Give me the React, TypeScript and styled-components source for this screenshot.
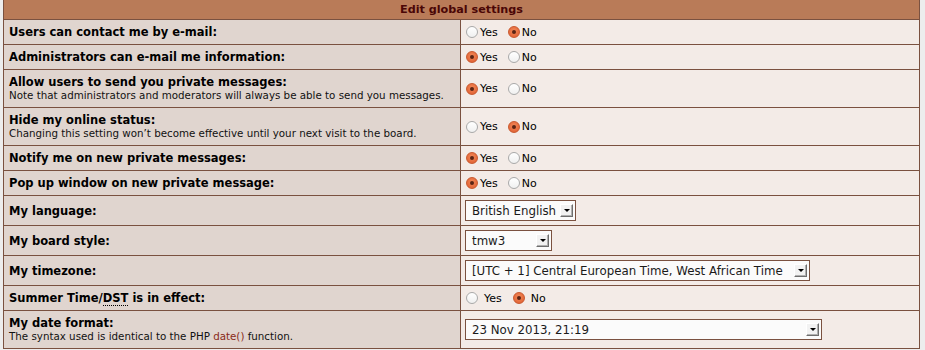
import React from "react";
import styled, { createGlobalStyle } from "styled-components";

const GlobalStyle = createGlobalStyle`
  body {
    margin: 0;
    background: #ededed;
    font-family: "DejaVu Sans", Verdana, sans-serif;
    color: #000;
  }
`;

type Setting = {
  label: React.ReactNode;
  explain?: React.ReactNode;
  kind: "radio" | "select";
  value?: boolean;
  options?: string;
  width?: number;
  wide?: boolean;
};

// built lazily so the styled parts below exist by the time it runs
function getSettings(): Setting[] {
  return [
    { label: "Users can contact me by e-mail:", kind: "radio", value: false },
    { label: "Administrators can e-mail me information:", kind: "radio", value: true },
    {
      label: "Allow users to send you private messages:",
      explain: "Note that administrators and moderators will always be able to send you messages.",
      kind: "radio",
      value: true,
    },
    {
      label: "Hide my online status:",
      explain: "Changing this setting won’t become effective until your next visit to the board.",
      kind: "radio",
      value: false,
    },
    { label: "Notify me on new private messages:", kind: "radio", value: true },
    { label: "Pop up window on new private message:", kind: "radio", value: true },
    { label: "My language:", kind: "select", options: "British English", width: 111 },
    { label: "My board style:", kind: "select", options: "tmw3", width: 87 },
    {
      label: "My timezone:",
      kind: "select",
      options: "[UTC + 1] Central European Time, West African Time",
      width: 345,
    },
    {
      label: (
        <>
          Summer Time/<Abbr>DST</Abbr> is in effect:
        </>
      ),
      kind: "radio",
      value: false,
      wide: true,
    },
    {
      label: "My date format:",
      explain: (
        <>
          The syntax used is identical to the PHP <Link>date()</Link> function.
        </>
      ),
      kind: "select",
      options: "23 Nov 2013, 21:19",
      width: 357,
    },
  ];
}

function RadioPair({ value, wide }: { value: boolean; wide?: boolean }) {
  return (
    <RadioGroup>
      <RadioOption wide={wide}>
        <Radio checked={value} />
        <span>Yes</span>
      </RadioOption>
      <RadioOption wide={wide}>
        <Radio checked={!value} />
        <span>No</span>
      </RadioOption>
    </RadioGroup>
  );
}

function FakeSelect({ text, width }: { text: string; width: number }) {
  return (
    <SelectBox style={{ width }}>
      <SelectText>{text}</SelectText>
      <ArrowButton>
        <Triangle />
      </ArrowButton>
    </SelectBox>
  );
}

function App() {
  const settings = getSettings();
  return (
    <>
      <GlobalStyle />
      <Page>
        <Panel>
          <HeaderBar>Edit global settings</HeaderBar>
          {settings.map((s, i) => (
            <Row key={i} size={s.explain ? "tall" : s.kind === "select" ? "select" : "normal"}>
              <LabelCell>
                <Label>{s.label}</Label>
                {s.explain && <Explain>{s.explain}</Explain>}
              </LabelCell>
              <ValueCell>
                {s.kind === "radio" ? (
                  <RadioPair value={!!s.value} wide={s.wide} />
                ) : (
                  <FakeSelect text={s.options || ""} width={s.width || 100} />
                )}
              </ValueCell>
            </Row>
          ))}
        </Panel>
      </Page>
    </>
  );
}

const Page = styled.div`
  padding-left: 3px;
`;

const Panel = styled.div`
  width: 915px;
  border-left: 1px solid #7a5140;
  border-right: 1px solid #7a5140;
  border-bottom: 1px solid #7a5140;
`;

const HeaderBar = styled.div`
  height: 19px;
  line-height: 19px;
  background: #b97b58;
  border-bottom: 1px solid #7a5140;
  text-align: center;
  font-weight: bold;
  font-size: 11.2px;
  color: #4a0606;
`;

const Row = styled.div<{ size: "normal" | "tall" | "select" }>`
  display: grid;
  grid-template-columns: 457px 1fr;
  height: ${(p) => (p.size === "tall" ? 37 : p.size === "select" ? 29 : 24)}px;
  border-bottom: 1px solid #7a5140;
  &:last-child {
    border-bottom: none;
  }
`;

const LabelCell = styled.div`
  background: #e0d5cf;
  border-right: 1px solid #7a5140;
  padding-left: 5px;
  display: flex;
  flex-direction: column;
  justify-content: center;
`;

const Label = styled.div`
  font-weight: bold;
  font-size: 11.5px;
  line-height: 14px;
  color: #000;
`;

const Explain = styled.div`
  font-size: 10.3px;
  line-height: 13px;
  color: #111;
`;

const Abbr = styled.abbr`
  text-decoration: none;
  border-bottom: 1px dotted #000;
`;

const Link = styled.span`
  color: #8a2a18;
`;

const ValueCell = styled.div`
  background: #f3ebe7;
  padding-left: 4px;
  display: flex;
  align-items: center;
`;

const RadioGroup = styled.div`
  display: flex;
  align-items: center;
  font-size: 11px;
  color: #000;
  padding-left: 1px;
`;

const RadioOption = styled.label<{ wide?: boolean }>`
  display: flex;
  align-items: center;
  gap: ${(p) => (p.wide ? 6 : 2)}px;
  margin-right: ${(p) => (p.wide ? 11 : 10)}px;
`;

const Radio = styled.span<{ checked: boolean }>`
  position: relative;
  width: 12px;
  height: 12px;
  box-sizing: border-box;
  border-radius: 50%;
  border: 1px solid ${(p) => (p.checked ? "#c9592f" : "#a9a9a9")};
  background: ${(p) =>
    p.checked
      ? "radial-gradient(circle at 50% 40%, #f38a5a 0%, #e4683a 70%, #d65a2e 100%)"
      : "linear-gradient(#ffffff, #f0f0f0)"};
  &::after {
    content: "";
    display: ${(p) => (p.checked ? "block" : "none")};
    position: absolute;
    left: 3px;
    top: 3px;
    width: 4px;
    height: 4px;
    border-radius: 50%;
    background: #5a2414;
  }
`;

const SelectBox = styled.div`
  height: 21px;
  box-sizing: border-box;
  border: 1px solid #7a5140;
  background: #fbfbfb;
  display: flex;
  align-items: center;
  justify-content: space-between;
  padding: 0 2px 0 6px;
`;

const SelectText = styled.span`
  font-size: 11.8px;
  color: #1a1a1a;
  white-space: nowrap;
`;

const ArrowButton = styled.span`
  width: 13px;
  height: 13px;
  box-sizing: border-box;
  background: #f2f2f2;
  border-top: 1px solid #ffffff;
  border-left: 1px solid #ffffff;
  border-right: 1px solid #6e6e6e;
  border-bottom: 1px solid #6e6e6e;
  box-shadow: inset -1px -1px 0 #b0b0b0;
  display: flex;
  align-items: center;
  justify-content: center;
`;

const Triangle = styled.span`
  width: 0;
  height: 0;
  border-left: 3px solid transparent;
  border-right: 3px solid transparent;
  border-top: 3px solid #000;
  margin-bottom: 1px;
`;

export default App;
